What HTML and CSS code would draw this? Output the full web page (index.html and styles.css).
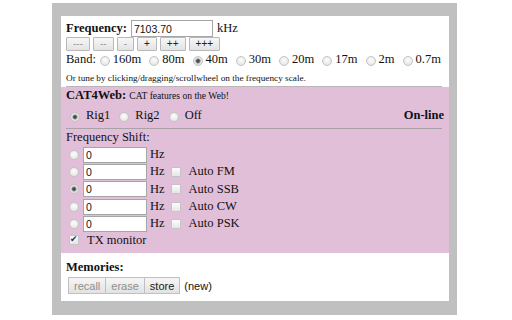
FILE: index.html
```html
<!DOCTYPE html>
<html>
<head>
<meta charset="utf-8">
<link rel="stylesheet" href="styles.css">
</head>
<body>
<div class="frame">
  <div class="panel">
    <div class="top">
      <div class="freq-row">
        <b class="lbl">Frequency:</b>
        <input class="freq" type="text" value="7103.70">
        <span class="unit">kHz</span>
      </div>
      <div class="step-row">
        <button class="step dim">---</button>
        <button class="step dim">--</button>
        <button class="step dim">-</button>
        <button class="step">+</button>
        <button class="step">++</button>
        <button class="step">+++</button>
      </div>
      <div class="band-row">
        <span class="band-lbl">Band:</span>
        <label class="opt first"><input type="radio" name="band" class="radio">160m</label>
        <label class="opt"><input type="radio" name="band" class="radio">80m</label>
        <label class="opt"><input type="radio" name="band" class="radio" checked>40m</label>
        <label class="opt"><input type="radio" name="band" class="radio">30m</label>
        <label class="opt"><input type="radio" name="band" class="radio">20m</label>
        <label class="opt"><input type="radio" name="band" class="radio">17m</label>
        <label class="opt"><input type="radio" name="band" class="radio">2m</label>
        <label class="opt"><input type="radio" name="band" class="radio">0.7m</label>
      </div>
      <div class="hint">Or tune by clicking/dragging/scrollwheel on the frequency scale.</div>
    </div>
    <div class="rule top-rule"></div>
    <div class="cat">
      <div class="cat-head"><b>CAT4Web:</b> <span class="tag">CAT features on the Web!</span></div>
      <div class="rig-row">
        <label class="rig"><input type="radio" name="rig" class="radio" checked>Rig1</label>
        <label class="rig"><input type="radio" name="rig" class="radio">Rig2</label>
        <label class="rig"><input type="radio" name="rig" class="radio">Off</label>
        <b class="status">On-line</b>
      </div>
      <div class="rule mid-rule"></div>
      <div class="shift-title">Frequency Shift:</div>
      <div class="shift-row">
        <input type="radio" name="shift" class="radio">
        <input class="shift" type="text" value="0">
        <span class="hz">Hz</span>
      </div>
      <div class="shift-row">
        <input type="radio" name="shift" class="radio">
        <input class="shift" type="text" value="0">
        <span class="hz">Hz</span>
        <label class="auto"><input type="checkbox" class="check">Auto FM</label>
      </div>
      <div class="shift-row">
        <input type="radio" name="shift" class="radio" checked>
        <input class="shift" type="text" value="0">
        <span class="hz">Hz</span>
        <label class="auto"><input type="checkbox" class="check">Auto SSB</label>
      </div>
      <div class="shift-row">
        <input type="radio" name="shift" class="radio">
        <input class="shift" type="text" value="0">
        <span class="hz">Hz</span>
        <label class="auto"><input type="checkbox" class="check">Auto CW</label>
      </div>
      <div class="shift-row">
        <input type="radio" name="shift" class="radio">
        <input class="shift" type="text" value="0">
        <span class="hz">Hz</span>
        <label class="auto"><input type="checkbox" class="check">Auto PSK</label>
      </div>
      <label class="tx-row"><input type="checkbox" class="check" checked>TX monitor</label>
    </div>
    <div class="mem">
      <div class="mem-title"><b>Memories:</b></div>
      <div class="mem-row">
        <button class="mbtn dim">recall</button><button class="mbtn dim">erase</button><button class="mbtn">store</button><span class="new">(new)</span>
      </div>
    </div>
  </div>
</div>
</body>
</html>
```
FILE: styles.css
```css
html, body {
  margin: 0;
  padding: 0;
  background: #ffffff;
}
body {
  font-family: "Liberation Serif", "Times New Roman", serif;
  font-size: 12.5px;
  color: #111;
}
.frame {
  margin: 3px 0 0 52px;
  width: 405px;
  height: 312px;
  box-sizing: border-box;
  padding: 13px 8px 14px 9px;
  background: #c0c0c0;
}
.panel {
  background: #fff;
  height: 285px;
  display: flex;
  flex-direction: column;
}
.top {
  padding: 4px 0 0 5px;
}
.freq-row {
  display: flex;
  align-items: center;
  height: 17px;
  line-height: 17px;
}
.lbl { font-weight: bold; }
.freq {
  margin: 0 0 0 4px;
  width: 82px;
  height: 17px;
  box-sizing: border-box;
  border: 1px solid #a6a6a6;
  padding: 0 2px;
  font: 10.5px "Liberation Sans", Arial, sans-serif;
  color: #111;
  outline: none;
}
.unit { margin-left: 4px; }
.step-row {
  display: flex;
  gap: 3px;
  height: 14px;
}
.step {
  height: 14px;
  margin: 0;
  padding: 0 6px;
  font: 10px "Liberation Sans", Arial, sans-serif;
  line-height: 12px;
  color: #222;
  border: 1px solid #b8b8b8;
  border-radius: 1px;
  background: linear-gradient(#f7f7f7, #e3e3e3);
}
.step.dim { color: #9a9a9a; }
.band-row {
  display: flex;
  align-items: center;
  height: 17px;
  line-height: 17px;
}
.opt {
  display: flex;
  align-items: center;
  margin-left: 8px;
}
.opt.first { margin-left: 4px; }
.radio {
  appearance: none;
  -webkit-appearance: none;
  width: 10px;
  height: 10px;
  margin: 2px 3px 0 0;
  box-sizing: border-box;
  border: 1px solid #c4c4c4;
  border-radius: 50%;
  background: radial-gradient(circle at 50% 40%, #fdfdfd 0, #ebebeb 60%, #dcdcdc 100%);
  flex: none;
}
.radio:checked {
  background: radial-gradient(circle at 50% 50%, #333 0, #555 1.3px, #a0a0a0 2.3px, #e6e6e6 3px, #dcdcdc 100%);
}
.hint {
  font-size: 9.25px;
  height: 14px;
  line-height: 14px;
  margin: 3px 0 1px;
}
.rule {
  height: 1px;
  background: #b9b5b8;
}
.top-rule {
  margin: 0 7px 0 5px;
}
.cat {
  background: #e1bfd9;
  height: 166px;
  box-sizing: border-box;
  padding: 0 5px 0 5px;
  display: flex;
  flex-direction: column;
}
.cat-head {
  height: 17px;
  line-height: 17px;
}
.tag {
  font-size: 9.6px;
}
.rig-row {
  display: flex;
  align-items: center;
  height: 17px;
  line-height: 17px;
  margin-top: 3px;
}
.rig {
  display: flex;
  align-items: center;
  margin-left: 9px;
}
.rig:first-child { margin-left: 4px; }
.rig .radio { margin-right: 6px; }
.status {
  margin-left: auto;
}
.mid-rule {
  margin: 4px 2px 0 0;
  background: #a9a2a7;
}
.shift-title {
  height: 17px;
  line-height: 17px;
}
.shift-row {
  display: flex;
  align-items: center;
  height: 17.3px;
  line-height: 17px;
}
.shift-row .radio { margin: 0 0 0 3px; }
.shift {
  margin: 0 0 0 4px;
  width: 64px;
  height: 16px;
  box-sizing: border-box;
  border: 1px solid #a6a6a6;
  padding: 0 2px;
  font: 10.5px "Liberation Sans", Arial, sans-serif;
  color: #111;
  outline: none;
}
.hz { margin-left: 3px; }
.auto {
  display: flex;
  align-items: center;
  margin-left: 6px;
}
.check {
  appearance: none;
  -webkit-appearance: none;
  width: 10px;
  height: 10px;
  margin: 0 8px 0 0;
  box-sizing: border-box;
  border: 1px solid #c4c4c4;
  border-radius: 1px;
  background: linear-gradient(#fcfcfc, #e6e6e6);
  flex: none;
  position: relative;
}
.check:checked::after {
  content: "\2714";
  position: absolute;
  left: 0px;
  top: -2px;
  font: 9px "DejaVu Sans", sans-serif;
  color: #333;
}
.tx-row {
  display: flex;
  align-items: center;
  height: 12px;
  line-height: 12px;
  margin-top: 2px;
}
.tx-row .check { margin-left: 3px; margin-right: 8px; }
.mem {
  padding: 6px 5px 0 5px;
}
.mem-title {
  height: 17px;
  line-height: 17px;
}
.mem-row {
  display: flex;
  align-items: center;
  height: 17px;
  margin-top: 1px;
  padding-left: 2px;
}
.mbtn {
  height: 17px;
  margin: 0;
  padding: 0 5px;
  font: 11px "Liberation Sans", Arial, sans-serif;
  color: #222;
  border: 1px solid #c0c0c0;
  border-radius: 0;
  background: linear-gradient(#f6f6f6, #e2e2e2);
}
.mbtn + .mbtn { border-left: none; }
.mbtn.dim { color: #8e8e8e; }
.new {
  margin-left: 4px;
  font: 11px "Liberation Sans", Arial, sans-serif;
}
```
